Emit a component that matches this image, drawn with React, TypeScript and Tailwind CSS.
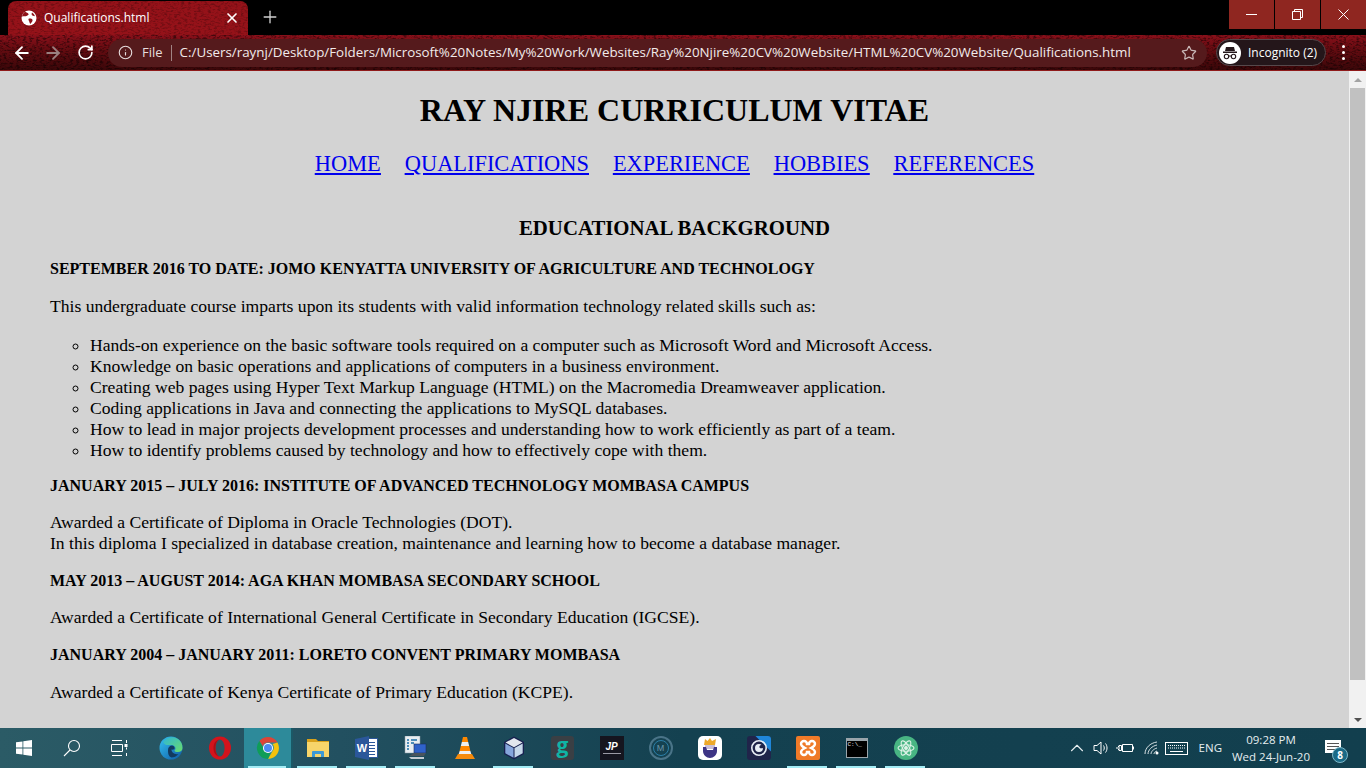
import React from "react";
import { ArrowLeft, ArrowRight, RotateCw, Info, Star, X, Plus, ChevronUp } from "lucide-react";

const uiFont = "font-['Open_Sans','Noto_Sans',sans-serif]";

// speckled theme texture for tab + toolbar
const Grain = ({ id, opacity }: { id: string; opacity: string }) => (
  <svg className={`absolute inset-0 w-full h-full pointer-events-none ${opacity}`}>
    <filter id={id}>
      <feTurbulence type="fractalNoise" baseFrequency="0.3 0.6" numOctaves="3" seed="4" />
      <feColorMatrix values="0 0 0 0 0  0 0 0 0 0  0 0 0 0 0  0 0 0 3.2 -1.45" />
    </filter>
    <rect width="100%" height="100%" filter={`url(#${id})`} />
  </svg>
);

const EdgeIcon = () => (
  <svg width="24" height="24" viewBox="0 0 24 24">
    <defs>
      <linearGradient id="edgeA" x1="0" y1="0" x2="1" y2="1">
        <stop offset="0" stopColor="#35c1f1" />
        <stop offset="1" stopColor="#0c59a4" />
      </linearGradient>
      <linearGradient id="edgeB" x1="0" y1="0" x2="1" y2="1">
        <stop offset="0" stopColor="#2fb6d6" />
        <stop offset="1" stopColor="#6bdc6a" />
      </linearGradient>
    </defs>
    <circle cx="12" cy="12" r="11.5" fill="url(#edgeA)" />
    <path d="M4 6c3-5 10-6 15-3 3 2 4.500 5 4.500 9 0 2.500-2 4-4.500 4-2 0-3.500-.6-3.500-1.600 2-1.500 1-5-3-5.400-3.500-.3-6.500 1-8.500-3z" fill="url(#edgeB)" />
    <path d="M9 14c0-3 2-4.500 4-4.500 1.500 0 3 1.300 2.500 3.500-1 .6-2 1-3 .6 0 2.900 3 5.400 7 4.400-2 2.500-4.500 3.500-7 3.500-3-1-3.500-4-3.500-7.500z" fill="#123a5f" />
  </svg>
);

const OperaIcon = () => (
  <svg width="24" height="24" viewBox="0 0 24 24">
    <ellipse cx="12" cy="12" rx="11" ry="11.500" fill="#d3141c" />
    <ellipse cx="12" cy="12" rx="4.600" ry="8.600" fill="#2b5763" />
    <path d="M12 3.400c-2.500 0-4.600 3.800-4.600 8.600s2.100 8.600 4.600 8.600c-4 0-6.500-4-6.500-8.600S8 3.400 12 3.400z" fill="#a80f17" />
  </svg>
);

const ChromeIcon = () => (
  <svg width="24" height="24" viewBox="0 0 24 24">
    <path d="M12 1a11 11 0 0 1 9.500 5.500H12a5.500 5.500 0 0 0-5.200 3.700L3.400 5.100A11 11 0 0 1 12 1z" fill="#db4437" />
    <path d="M21.500 6.500A11 11 0 0 1 12 23l4.700-8.200A5.500 5.500 0 0 0 16.500 8z" fill="#f4c20d" />
    <path d="M12 23A11 11 0 0 1 3.400 5.100l4.700 8.200a5.500 5.500 0 0 0 6.400 3.400z" fill="#0f9d58" />
    <circle cx="12" cy="12" r="5" fill="#fff" />
    <circle cx="12" cy="12" r="4" fill="#4a8af4" />
  </svg>
);

const FolderIcon = () => (
  <svg width="22" height="20" viewBox="0 0 22 20">
    <path d="M0 1h9l2 2h11v2H0z" fill="#d9a21b" />
    <rect x="0" y="4" width="22" height="15" fill="#f7d56a" />
    <path d="M5 19v-5a1 1 0 0 1 1-1h10a1 1 0 0 1 1 1v5h-3v-3H8v3z" fill="#3d9ad6" />
  </svg>
);

const WordIcon = () => (
  <div className="relative w-[23px] h-[24px]">
    <div className="absolute left-[8px] top-[2px] w-[15px] h-[20px] bg-white border border-[#2b579a] flex flex-col justify-center gap-[2px] pl-[5px] pr-[2px]">
      <div className="h-px bg-[#2b579a]" />
      <div className="h-px bg-[#2b579a]" />
      <div className="h-px bg-[#2b579a]" />
      <div className="h-px bg-[#2b579a]" />
      <div className="h-px bg-[#2b579a]" />
    </div>
    <div className="absolute left-0 top-0 w-[14px] h-[24px] bg-[#2b579a] flex items-center justify-center text-white text-[11px] font-bold font-['Liberation_Sans',sans-serif] [clip-path:polygon(0_12%,100%_0,100%_100%,0_88%)]">
      W
    </div>
  </div>
);

const NetworkIcon = () => (
  <svg width="24" height="24" viewBox="0 0 24 24">
    <rect x="1" y="0" width="15" height="17" fill="#e8eef2" stroke="#8a9aa5" strokeWidth=".5" />
    <path d="M3 4h2M3 7h2M3 10h2M3 13h2M7 4h6M7 7h3" stroke="#1d6fa8" strokeWidth="1.300" />
    <rect x="10" y="8" width="12" height="9" fill="#2f62c9" stroke="#1c2f5c" strokeWidth=".6" />
    <path d="M5 20l5-3h12l-2 3z" fill="#49545c" />
    <path d="M5 21h15v2H7z" fill="#c4ccd2" />
  </svg>
);

const VlcIcon = () => (
  <svg width="20" height="24" viewBox="0 0 20 24">
    <path d="M8 1h4l1.200 5H6.800z" fill="#ff8800" />
    <path d="M6.800 6h6.400l1 4H5.800z" fill="#eee" />
    <path d="M5.800 10h8.400l1.200 5H4.600z" fill="#ff8800" />
    <path d="M4.600 15h10.800l1 3.500H3.600z" fill="#eee" />
    <path d="M3 18h14l3 5H0z" fill="#f58a0b" />
  </svg>
);

const CubeIcon = () => (
  <svg width="24" height="24" viewBox="0 0 24 24">
    <path d="M12 0.500l10 5.500v12l-10 5.500-10-5.500V6z" fill="#17204f" />
    <path d="M12 2l8.500 4.500-8.500 4.800-8.500-4.800z" fill="#e2e7ee" />
    <path d="M3.300 7.600l8.200 4.500v9.700l-8.200-4.500z" fill="#86a6dc" />
    <path d="M20.700 7.600l-8.200 4.500v9.700l8.200-4.500z" fill="#c6d8ea" />
  </svg>
);

const BeardIcon = () => (
  <svg width="24" height="24" viewBox="0 0 24 24">
    <rect width="24" height="24" rx="5" fill="#fff" />
    <path d="M6 9l1-6 2.500 2L12 2l2 3 4-2-1 6z" fill="#eda92a" />
    <rect x="7" y="9" width="10" height="4" fill="#c9bfd8" />
    <path d="M5 11h3l1 3h6l1-3h3v4c0 4-3.500 7-7 7s-7-3-7-7z" fill="#3d3585" />
  </svg>
);

const BlueAppIcon = () => (
  <div className="relative w-[24px] h-[24px] bg-[#20244a] rounded-[3px] overflow-hidden flex items-center justify-center">
    <div className="absolute right-0 top-0 w-[22px] h-[22px] bg-[#1f86d9] translate-x-[11px] -translate-y-[11px] rotate-45" />
    <svg width="18" height="18" viewBox="0 0 18 18" className="relative">
      <circle cx="9" cy="9" r="7.200" fill="none" stroke="#e8edf5" strokeWidth="1.600" />
      <path d="M9 5a4 4 0 1 0 4 4c-1 .6-3 .4-3.500-.6-.4-1 .4-2.400 2-2.700A4 4 0 0 0 9 5z" fill="#e8edf5" />
    </svg>
  </div>
);

const XamppIcon = () => (
  <div className="w-[24px] h-[24px] bg-[#ef7a28] rounded-[2px] flex items-center justify-center">
    <svg width="20" height="20" viewBox="0 0 20 20" fill="none" stroke="#fff" strokeWidth="2.400">
      <path d="M6 3a3 3 0 0 0-3 3c0 2 2 3 4 4-2 1-4 2-4 4a3 3 0 0 0 6 0h2a3 3 0 0 0 6 0c0-2-2-3-4-4 2-1 4-2 4-4a3 3 0 0 0-6 0H9a3 3 0 0 0-3-3z" />
    </svg>
  </div>
);

const AtomIcon = () => (
  <div className="w-[24px] h-[24px] rounded-full bg-[#48b583] flex items-center justify-center">
    <svg width="20" height="20" viewBox="0 0 20 20" fill="none" stroke="#dff3e8" strokeWidth="1.100">
      <ellipse cx="10" cy="10" rx="8" ry="3.200" transform="rotate(60 10 10)" />
      <ellipse cx="10" cy="10" rx="8" ry="3.200" transform="rotate(-60 10 10)" />
      <ellipse cx="10" cy="10" rx="8" ry="3.200" />
      <circle cx="10" cy="10" r="1.400" fill="#dff3e8" />
    </svg>
  </div>
);

const taskbarApps: { key: string; icon: React.ReactNode; open?: boolean; active?: boolean }[] = [
  { key: "edge", icon: <EdgeIcon /> },
  { key: "opera", icon: <OperaIcon /> },
  { key: "chrome", icon: <ChromeIcon />, open: true, active: true },
  { key: "explorer", icon: <FolderIcon />, open: true },
  { key: "word", icon: <WordIcon />, open: true },
  { key: "network", icon: <NetworkIcon />, open: true },
  { key: "vlc", icon: <VlcIcon /> },
  { key: "cube", icon: <CubeIcon />, open: true },
  {
    key: "g",
    icon: (
      <div className="w-[23px] h-[24px] bg-[#3a3f44] rounded-[3px] flex items-center justify-center text-[#0fb5a5] text-[21px] leading-none font-bold font-['Open_Sans',sans-serif] pb-[5px]">
        g
      </div>
    ),
  },
  {
    key: "jp",
    icon: (
      <div className="w-[24px] h-[24px] bg-[#15151f] flex flex-col items-center justify-center text-white text-[10px] italic font-bold leading-none font-['Liberation_Sans',sans-serif]">
        JP
        <div className="w-[18px] h-px bg-[#9a9aa5] mt-px" />
      </div>
    ),
  },
  {
    key: "m",
    icon: (
      <div className="w-[24px] h-[24px] rounded-full border-2 border-[#4a7488] flex items-center justify-center">
        <div className="w-[16px] h-[16px] rounded-full border border-[#2c7fa8] flex items-center justify-center text-[#6a95a8] text-[9px] leading-none font-['Liberation_Sans',sans-serif]">
          M
        </div>
      </div>
    ),
  },
  { key: "beard", icon: <BeardIcon /> },
  { key: "blue", icon: <BlueAppIcon /> },
  { key: "xampp", icon: <XamppIcon />, open: true },
  {
    key: "cmd",
    icon: (
      <div className="w-[22px] h-[20px] bg-black border border-[#9aa5ab] border-t-[3px] text-[#e5e5e5] text-[6px] leading-[8px] pl-px font-['Liberation_Mono',monospace]">
        C:\_
      </div>
    ),
    open: true,
  },
  { key: "atom", icon: <AtomIcon />, open: true },
];

const Section = ({ title, className, children }: { title: string; className: string; children: React.ReactNode }) => (
  <section className={className}>
    <h3 className="text-[16px] leading-[18px] font-bold">{title}</h3>
    {children}
  </section>
);

const Page = () => (
  <main className="flex-1 min-w-0 overflow-hidden bg-[#d3d3d3] text-black font-['Liberation_Serif',serif] px-[50px]">
    <h1 className="text-[32px] leading-[37px] font-bold text-center mt-[21px]">RAY NJIRE CURRICULUM VITAE</h1>
    <nav className="flex justify-center gap-6 text-[22.4px] leading-[27px] text-[#0000ee] underline mt-[21px]">
      <a href="#home">HOME</a>
      <a href="#qualifications">QUALIFICATIONS</a>
      <a href="#experience">EXPERIENCE</a>
      <a href="#hobbies">HOBBIES</a>
      <a href="#references">REFERENCES</a>
    </nav>
    <h2 className="text-[20.8px] leading-[24px] font-bold text-center mt-[39px]">EDUCATIONAL BACKGROUND</h2>

    <Section title="SEPTEMBER 2016 TO DATE: JOMO KENYATTA UNIVERSITY OF AGRICULTURE AND TECHNOLOGY" className="mt-[20px]">
      <p className="text-[17.6px] leading-[21px] mt-[18px]">
        This undergraduate course imparts upon its students with valid information technology related skills such as:
      </p>
      <ul className="list-[circle] pl-10 text-[17.6px] leading-[21px] mt-[18px]">
        <li>Hands-on experience on the basic software tools required on a computer such as Microsoft Word and Microsoft Access.</li>
        <li>Knowledge on basic operations and applications of computers in a business environment.</li>
        <li>Creating web pages using Hyper Text Markup Language (HTML) on the Macromedia Dreamweaver application.</li>
        <li>Coding applications in Java and connecting the applications to MySQL databases.</li>
        <li>How to lead in major projects development processes and understanding how to work efficiently as part of a team.</li>
        <li>How to identify problems caused by technology and how to effectively cope with them.</li>
      </ul>
    </Section>

    <Section title="JANUARY 2015 – JULY 2016: INSTITUTE OF ADVANCED TECHNOLOGY MOMBASA CAMPUS" className="mt-[16px]">
      <p className="text-[17.6px] leading-[21px] mt-[17px]">
        Awarded a Certificate of Diploma in Oracle Technologies (DOT).
        <br />
        In this diploma I specialized in database creation, maintenance and learning how to become a database manager.
      </p>
    </Section>

    <Section title="MAY 2013 – AUGUST 2014: AGA KHAN MOMBASA SECONDARY SCHOOL" className="mt-[18px]">
      <p className="text-[17.6px] leading-[21px] mt-[17px]">
        Awarded a Certificate of International General Certificate in Secondary Education (IGCSE).
      </p>
    </Section>

    <Section title="JANUARY 2004 – JANUARY 2011: LORETO CONVENT PRIMARY MOMBASA" className="mt-[18px]">
      <p className="text-[17.6px] leading-[21px] mt-[18px]">
        Awarded a Certificate of Kenya Certificate of Primary Education (KCPE).
      </p>
    </Section>
  </main>
);

export default function App() {
  return (
    <div className="h-screen w-full flex flex-col overflow-hidden bg-black">
      {/* chrome */}
      <header className={`shrink-0 ${uiFont} text-white`}>
        <div className="h-[35px] flex items-end bg-black pl-[8px]">
          <div className="relative w-[240px] h-[34px] rounded-t-[8px] overflow-hidden bg-[#951219] flex items-center pl-[13px] pr-[8px]">
            <Grain id="tabGrain" opacity="opacity-25" />
            <svg width="16" height="16" viewBox="0 0 16 16" className="relative shrink-0">
              <circle cx="8" cy="8" r="7.500" fill="#fff" />
              <path d="M4 1.800c1.500.7 3 1 3.500 2.200.4 1-1 1.500-2 2-.8.400-2.500 0-4.500.5.300-1.900 1.400-3.600 3-4.700zM8 8.500c1.500-.3 3 .2 3.500 1.300.4 1.200-.8 2.600-2.200 4.200-.8-.8-.8-2-1.300-3-.5-.9-1-2.200 0-2.500zM11 2.500c1.300.8 2.400 2.100 2.900 3.600-1 .2-2.300-.2-3-1-.4-.7-.3-1.800.1-2.600z" fill="#8e1219" />
            </svg>
            <span className="relative ml-[7px] text-[12px] leading-none whitespace-nowrap">Qualifications.html</span>
            <X size={16} strokeWidth={2.500} className="relative ml-auto" />
          </div>
          <Plus size={20} strokeWidth={1.600} className="ml-[12px] mb-[8px] text-[#d0d0d0]" />
          <div className="ml-auto self-start h-[29px] flex gap-px">
            <div className="w-[45px] h-full bg-[#8f2620] flex items-center justify-center">
              <div className="w-[11px] h-px bg-white" />
            </div>
            <div className="w-[45px] h-full bg-[#8f2620] flex items-center justify-center">
              <svg width="11" height="11" viewBox="0 0 11 11" fill="none" stroke="#fff">
                <path d="M.5 2.500h8v8h-8zM2.500 2.500v-2h8v8h-2" />
              </svg>
            </div>
            <div className="w-[45px] h-full bg-[#8f2620] flex items-center justify-center">
              <svg width="11" height="11" viewBox="0 0 11 11" fill="none" stroke="#fff">
                <path d="M.5.500l10 10M10.500.500l-10 10" />
              </svg>
            </div>
          </div>
        </div>
        <div className="relative h-[36px] flex items-center border-b border-[#8f1a1a] bg-[linear-gradient(180deg,#8a101a_0%,#6a0c12_35%,#3a0709_100%)]">
          <Grain id="barGrain" opacity="opacity-50" />
          <ArrowLeft size={20} strokeWidth={2.200} className="relative ml-[12px]" />
          <ArrowRight size={20} strokeWidth={2.200} className="relative ml-[11px] text-[#9a8080]" />
          <RotateCw size={17} strokeWidth={2.400} className="relative ml-[14px]" />
          <div className="relative ml-[14px] w-[1099px] h-[28px] rounded-full bg-[#551a1c] flex items-center pl-[10px]">
            <Info size={15} strokeWidth={1.800} className="text-[#e6dcdc]" />
            <span className="ml-[9px] text-[13px] leading-none text-[#e6dcdc]">File</span>
            <div className="ml-[8px] w-px h-[16px] bg-[#a08484]" />
            <span className="ml-[8px] text-[13.37px] leading-none whitespace-nowrap text-[#f2eaea]">
              C:/Users/raynj/Desktop/Folders/Microsoft%20Notes/My%20Work/Websites/Ray%20Njire%20CV%20Website/HTML%20CV%20Website/Qualifications.html
            </span>
            <Star size={16} strokeWidth={1.800} className="ml-auto mr-[10px] text-[#c9b8b8]" />
          </div>
          <div className="relative ml-[9px] w-[110px] h-[27px] rounded-full bg-[#24161a] border border-[#55484b] flex items-center pl-[2px]">
            <div className="w-[22px] h-[22px] rounded-full bg-white flex items-center justify-center">
              <svg width="16" height="14" viewBox="0 0 16 14" fill="#24161a">
                <path d="M4 1h8l1 4H3zM1 5.500h14V7H1z" />
                <circle cx="4.500" cy="10.500" r="2.200" fill="none" stroke="#24161a" strokeWidth="1.100" />
                <circle cx="11.500" cy="10.500" r="2.200" fill="none" stroke="#24161a" strokeWidth="1.100" />
                <path d="M6.500 10h3" stroke="#24161a" />
              </svg>
            </div>
            <span className="ml-[7px] text-[12px] leading-none whitespace-nowrap">Incognito (2)</span>
          </div>
          <div className="relative ml-[16px] flex flex-col gap-[3px]">
            <div className="w-[3px] h-[3px] rounded-full bg-white" />
            <div className="w-[3px] h-[3px] rounded-full bg-white" />
            <div className="w-[3px] h-[3px] rounded-full bg-white" />
          </div>
        </div>
      </header>

      {/* page + scrollbar */}
      <div className="flex-1 min-h-0 flex">
        <Page />
        <aside className="w-[17px] shrink-0 bg-[#f1f1f1] flex flex-col items-center">
          <div className="h-[17px] flex items-center justify-center">
            <div className="w-0 h-0 border-x-[4px] border-x-transparent border-b-[4px] border-b-[#a3a3a3]" />
          </div>
          <div className="w-[15px] h-[592px] bg-[#c1c1c1]" />
          <div className="flex-1" />
          <div className="h-[17px] flex items-center justify-center">
            <div className="w-0 h-0 border-x-[4px] border-x-transparent border-t-[4px] border-t-[#505050]" />
          </div>
        </aside>
      </div>

      {/* taskbar */}
      <footer className={`shrink-0 h-[40px] flex items-center text-white ${uiFont} bg-[linear-gradient(90deg,#2b5b66_0%,#225060_25%,#144150_50%,#123f4e_100%)]`}>
        <div className="w-[48px] h-full flex items-center justify-center">
          <svg width="16" height="16" viewBox="0 0 16 16" fill="#fff">
            <path d="M0 2.300l6.500-.9v6.200H0zM7.300 1.300L16 0v7.600H7.300zM0 8.400h6.500v6.200L0 13.700zM7.300 8.400H16V16l-8.700-1.200z" />
          </svg>
        </div>
        <div className="w-[48px] h-full flex items-center justify-center">
          <svg width="18" height="18" viewBox="0 0 18 18" fill="none" stroke="#fff" strokeWidth="1.100">
            <circle cx="11" cy="7" r="5.500" />
            <path d="M7 11l-6 6" />
          </svg>
        </div>
        <div className="w-[47px] h-full flex items-center justify-center">
          <svg width="17" height="16" viewBox="0 0 17 16" fill="none" stroke="#fff" strokeWidth="1">
            <path d="M1 .5h10M1 15.500h10M.5 4.500h11v7H.5zM15.500 0v3M15.500 13v3M15.500 7.500v2" />
            <rect x="13.500" y="4" width="3" height="3" fill="#fff" stroke="none" />
          </svg>
        </div>
        <div className="w-[3px]" />
        {taskbarApps.map((app) => (
          <div
            key={app.key}
            className={`relative w-[49px] h-full flex items-center justify-center ${app.active ? "bg-[#2d8a9a] border-r-2 border-[#1b5866]" : ""}`}
          >
            {app.icon}
            {app.open ? <div className="absolute bottom-0 left-[4px] right-[5px] h-[2px] bg-[#a3ecf5]" /> : null}
          </div>
        ))}
        <div className="ml-auto flex items-center h-full text-[#e6eef0]">
          <ChevronUp size={22} strokeWidth={1.200} />
          <svg width="17" height="14" viewBox="0 0 17 14" fill="none" stroke="#fff" strokeWidth="1" className="ml-[5px]">
            <path d="M1 4.500h3L8 1v12L4 9.500H1zM10.500 4.500c1 1.500 1 3.500 0 5M12.500 2.500c2 2.500 2 6.500 0 9" />
          </svg>
          <svg width="18" height="12" viewBox="0 0 18 12" fill="none" stroke="#fff" strokeWidth="1" className="ml-[6px]">
            <path d="M6.500 2.500H16.500v7H6.500zM0 6h2M3 3.500h2.500v5H3zM2 4.500h1M2 7.500h1" />
            <rect x="17" y="4.500" width="1" height="3" fill="#fff" stroke="none" />
          </svg>
          <svg width="16" height="14" viewBox="0 0 16 14" fill="none" stroke="#d8e2e5" strokeWidth="1" className="ml-[10px]">
            <path d="M1 13C1 7 6 2 13 1M4 13c0-4 4-8 9-9M7 13c0-2.500 2.500-5 6-6M10 13c0-1 1-2.500 3-3" />
            <circle cx="13" cy="12" r="1.500" fill="#fff" stroke="none" />
          </svg>
          <svg width="23" height="13" viewBox="0 0 23 13" fill="none" stroke="#fff" strokeWidth="1" className="ml-[5px]">
            <rect x=".5" y=".5" width="22" height="12" />
            <path d="M3 3.500h17M3 6h17" strokeDasharray="1 1" />
            <path d="M5 9.500h13" />
          </svg>
          <span className="ml-[11px] text-[11.500px] leading-none">ENG</span>
          <div className="ml-[7px] w-[84px] flex flex-col items-center text-[11.500px] leading-[17px] whitespace-nowrap">
            <span>09:28 PM</span>
            <span>Wed 24-Jun-20</span>
          </div>
          <div className="relative ml-[9px] mr-[22px] w-[22px] h-full">
            <div className="absolute left-[3px] top-[12px] w-[16px] h-[13px] bg-white flex flex-col gap-[2px] pt-[3px] px-[2px]">
              <div className="h-px bg-[#555]" />
              <div className="h-px bg-[#555]" />
              <div className="h-px bg-[#555]" />
            </div>
            <div className="absolute left-[10px] top-[19px] w-[16px] h-[16px] rounded-full bg-[#1a6a86] border border-[#7fb8c8] flex items-center justify-center text-white text-[10px] font-bold leading-none">
              8
            </div>
          </div>
        </div>
      </footer>
    </div>
  );
}
